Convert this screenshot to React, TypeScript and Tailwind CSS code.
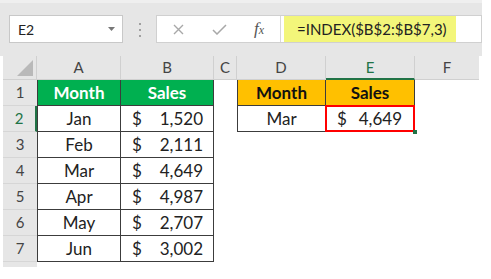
import React from "react";

const rows = [
  { n: 2, m: "Jan", v: "1,520" },
  { n: 3, m: "Feb", v: "2,111" },
  { n: 4, m: "Mar", v: "4,649" },
  { n: 5, m: "Apr", v: "4,987" },
  { n: 6, m: "May", v: "2,707" },
  { n: 7, m: "Jun", v: "3,002" },
];

const colHead =
  "flex items-center justify-center border-r border-b border-[#d0d0d0] bg-[#e6e6e6] text-[15px] text-[#444]";
const rowHead =
  "flex items-center justify-center border-b border-[#d6d6d6] bg-[#e6e6e6] text-[15px] text-[#444]";
const dark = "border-[#3c3c3c]";

function Money({ v }: { v: string }) {
  return (
    <div className={`flex items-center justify-between border-r border-b ${dark} pl-[11px] pr-[10px] text-[17px] text-[#222]`}>
      <span>$</span>
      <span>{v}</span>
    </div>
  );
}

export default function App() {
  return (
    <div className="h-[279px] w-[491px] bg-white" style={{ fontFamily: "Lato, 'Liberation Sans', sans-serif" }}>
      <div className="w-[482px] bg-[#e6e6e6]">
        {/* formula bar */}
        <div className="flex h-[56px] items-start border-t-[3px] border-[#efefef] pt-[12px]">
          <div className="ml-[9px] flex h-[28px] w-[114px] items-center justify-between border border-[#c8c8c8] bg-white pl-[8px] pr-[7px]">
            <span className="text-[14px] text-[#222]">E2</span>
            <svg width="7" height="4" viewBox="0 0 7 4">
              <path d="M0 0h7L3.5 4z" fill="#777" />
            </svg>
          </div>
          <div className="ml-[16px] flex h-[28px] flex-col justify-center gap-[4px] pt-[1px]">
            <span className="h-[2px] w-[2px] bg-[#a0a0a0]" />
            <span className="h-[2px] w-[2px] bg-[#a0a0a0]" />
            <span className="h-[2px] w-[2px] bg-[#a0a0a0]" />
          </div>
          <div className="ml-[15px] flex h-[28px] flex-1 items-stretch border border-[#d0d0d0] bg-white">
            <div className="flex w-[123px] items-center">
              <svg className="ml-[16px]" width="11" height="11" viewBox="0 0 11 11">
                <path d="M1 1l9 9M10 1l-9 9" stroke="#a8a8a8" strokeWidth="1.4" fill="none" />
              </svg>
              <svg className="ml-[28px]" width="15" height="11" viewBox="0 0 15 11">
                <path d="M1 6l4 4L14 1" stroke="#a8a8a8" strokeWidth="1.5" fill="none" />
              </svg>
              <span
                className="ml-[27px] text-[17px] italic text-[#555]"
                style={{ fontFamily: "'Liberation Serif', serif" }}
              >
                f<span className="text-[12px]">x</span>
              </span>
            </div>
            <div className="w-[4px] border-l border-[#d8d8d8] bg-white" />
            <div className="flex w-[172px] items-center bg-[#f3f67a] pl-[13px] text-[15px] text-[#222]">
              =INDEX($B$2:$B$7,3)
            </div>
          </div>
        </div>

        {/* sheet */}
        <div className="grid grid-cols-[37px_84px_93px_23px_89px_89px_64px] grid-rows-[24px_repeat(7,26px)_5px] bg-white">
          <div className="ml-[3px] flex items-end justify-end border-r border-b border-[#d0d0d0] bg-[#e6e6e6] pr-[3px] pb-[3px]">
            <svg width="16" height="16" viewBox="0 0 16 16">
              <path d="M16 0V16H0z" fill="#b9b9b9" />
            </svg>
          </div>
          <div className={colHead}>A</div>
          <div className={colHead}>B</div>
          <div className={colHead}>C</div>
          <div className={colHead}>D</div>
          <div className={`${colHead} !border-b-2 !border-b-[#217346] bg-[#d3d3d3] text-[#217346]`}>E</div>
          <div className={`${colHead} border-r-0`}>F</div>

          {/* row 1 */}
          <div className={`${rowHead} ml-[3px]`}>1</div>
          <div className={`flex items-center justify-center border-l border-r border-b ${dark} bg-[#00b050] text-[17px] font-bold text-white`}>
            Month
          </div>
          <div className={`flex items-center justify-center border-r border-b ${dark} bg-[#00b050] text-[17px] font-bold text-white`}>
            Sales
          </div>
          <div />
          <div className={`flex items-center justify-center border-l border-r border-b ${dark} bg-[#ffc000] text-[17px] font-bold text-[#111]`}>
            Month
          </div>
          <div className={`flex items-center justify-center border-r border-b ${dark} bg-[#ffc000] text-[17px] font-bold text-[#111]`}>
            Sales
          </div>
          <div />

          {rows.map((r) => (
            <React.Fragment key={r.n}>
              <div
                className={`${rowHead} ml-[3px] ${
                  r.n === 2 ? "border-r-2 border-r-[#217346] bg-[#d3d3d3] text-[#217346]" : ""
                }`}
              >
                {r.n}
              </div>
              <div className={`flex items-center justify-center border-l border-r border-b ${dark} text-[17px] text-[#222]`}>
                {r.m}
              </div>
              <Money v={r.v} />
              <div />
              {r.n === 2 ? (
                <>
                  <div className={`flex items-center justify-center border-l border-r border-b ${dark} text-[17px] text-[#222]`}>
                    Mar
                  </div>
                  <div className="relative">
                    <div className={`flex h-full items-center justify-between border-r border-b ${dark} pl-[11px] pr-[12px] text-[17px] text-[#222]`}>
                      <span>$</span>
                      <span>4,649</span>
                    </div>
                    <div className="absolute -top-px -left-px right-0 bottom-0 border-2 border-[#ff0000]" />
                    <div className="absolute -right-[2px] -bottom-[2px] h-[4px] w-[4px] bg-[#217346]" />
                  </div>
                </>
              ) : (
                <>
                  <div />
                  <div />
                </>
              )}
              <div />
            </React.Fragment>
          ))}

          <div className="ml-[3px] bg-[#e6e6e6]" />
          <div className="col-span-6" />
        </div>
      </div>
    </div>
  );
}
